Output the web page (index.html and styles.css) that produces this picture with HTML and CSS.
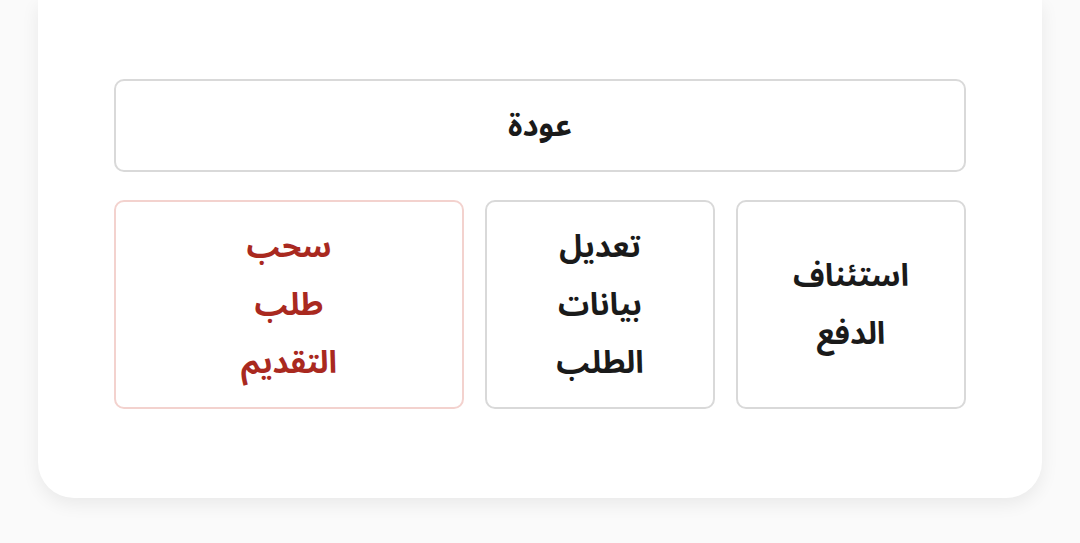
FILE: index.html
```html
<!DOCTYPE html>
<html lang="ar" dir="rtl">
<head>
<meta charset="utf-8">
<link rel="stylesheet" href="styles.css">
</head>
<body>
<main class="card">
  <button class="btn btn-back"><span class="label">عودة</span></button>
  <div class="actions">
    <button class="btn btn-action btn-resume"><span class="label stack">استئناف الدفع</span></button>
    <button class="btn btn-action btn-edit"><span class="label stack">تعديل بيانات الطلب</span></button>
    <button class="btn btn-action btn-withdraw"><span class="label stack">سحب طلب التقديم</span></button>
  </div>
</main>
</body>
</html>
```

FILE: styles.css
```css
html, body {
  margin: 0;
  padding: 0;
}
body {
  background: #fafafa;
  font-family: "Noto Sans Arabic", "Noto Sans", "DejaVu Sans", sans-serif;
  width: 1080px;
  height: 543px;
  overflow: hidden;
}
.card {
  box-sizing: border-box;
  width: 1004px;
  margin: 0 38px;
  background: #ffffff;
  border-radius: 0 0 36px 36px;
  box-shadow: 0 6px 18px rgba(0, 0, 0, 0.07);
  padding: 79px 76px 89px;
  display: flex;
  flex-direction: column;
  gap: 28px;
}
.btn {
  box-sizing: border-box;
  background: #ffffff;
  border: 2px solid #d9d9d9;
  border-radius: 10px;
  font-family: inherit;
  font-weight: 700;
  font-size: 31px;
  color: #1a1a1a;
  display: flex;
  align-items: center;
  justify-content: center;
  padding: 0;
  margin: 0;
}
.btn-back {
  height: 93px;
  width: 100%;
}
.actions {
  display: grid;
  grid-template-columns: 230px 230px 1fr;
  gap: 21px;
}
.btn-action {
  height: 209px;
}
.label {
  line-height: 58px;
}
.stack {
  width: min-content;
  text-align: center;
}
.btn-withdraw {
  border-color: #f3d2ce;
  color: #a9291f;
}
```
